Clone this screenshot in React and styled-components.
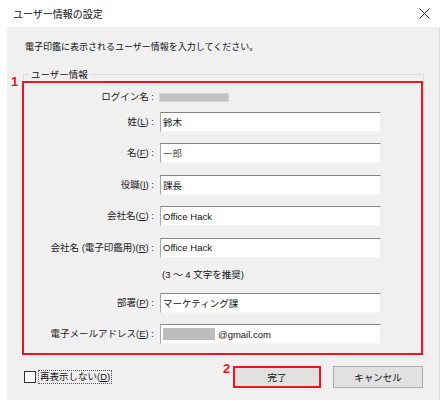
import React from "react";
import styled, { createGlobalStyle } from "styled-components";

const GlobalStyle = createGlobalStyle`
  html, body { margin: 0; padding: 0; background: #ffffff; }
  body { font-family: "Liberation Sans", "Noto Sans CJK JP", sans-serif; color: #111; }
  * { box-sizing: border-box; }
`;

const Page = styled.div`
  width: 443px;
  height: 407px;
  padding-left: 7px;
  background: #fff;
`;

const Window = styled.div`
  position: relative;
  width: 433px;
  display: flex;
  flex-direction: column;
`;

const TitleBar = styled.div`
  height: 27px;
  background: #fff;
  display: flex;
  align-items: center;
  justify-content: space-between;
  padding: 0 10px 0 6px;
  font-size: 10px;
  color: #111;
`;

const Body = styled.div`
  height: 373px;
  background: #f0f0f0;
  border-right: 1px solid #dadada;
  padding: 13px 16px 11px 16px;
  display: flex;
  flex-direction: column;
`;

const Intro = styled.div`
  font-size: 9px;
  line-height: 14px;
  padding-left: 2px;
  white-space: nowrap;
`;

const Group = styled.fieldset`
  margin: 14px -1px 0 0;
  padding: 0;
  min-width: 0;
  border: 1px solid #dcdcdc;
  border-bottom: none;
`;

const Legend = styled.legend`
  font-size: 9.5px;
  line-height: 13px;
  padding: 0 2px;
  margin-left: 5px;
`;

const RedFrame = styled.div`
  margin: 0 0 0 -2px;
  border: 2px solid #f0141e;
  padding: 8px 0 8.5px 0;
  display: flex;
  flex-direction: column;
  gap: 11.5px;
`;

const Row = styled.div`
  display: grid;
  grid-template-columns: 130px 221px;
  column-gap: 6px;
  align-items: center;
  height: ${(p) => p.$h}px;
`;

const Label = styled.div`
  text-align: right;
  white-space: nowrap;
  font-size: 9.5px;
  line-height: 12px;
  color: #1a1a1a;
  u { text-decoration: underline; }
`;

const Input = styled.div`
  height: 20px;
  background: #fff;
  border: 1px solid;
  border-color: #858585 #ececec #f6f6f6 #a8a8a8;
  display: flex;
  align-items: center;
  padding-left: 2px;
  font-size: 9.5px;
  color: #111;
  white-space: nowrap;
`;

const GrayBar = styled.div`
  width: 70px;
  height: 9px;
  margin-left: -1px;
  background: #c2c2c2;
  border: 1px solid #d4d4d4;
`;

const Masked = styled.span`
  display: inline-block;
  width: 52px;
  height: 12px;
  background: #bdbdbd;
  margin-right: 3px;
`;

const Hint = styled.div`
  grid-column: 2;
  font-size: 9.5px;
  line-height: 12px;
  padding-left: 2px;
  white-space: nowrap;
`;

const Footer = styled.div`
  margin-top: 11px;
  display: flex;
  align-items: center;
  justify-content: space-between;
`;

const CheckLabel = styled.label`
  display: flex;
  align-items: center;
  gap: 2px;
  margin-left: 1px;
  font-size: 9.5px;
`;

const Box = styled.span`
  width: 12px;
  height: 12px;
  background: #fff;
  border: 1px solid #333;
`;

const Focus = styled.span`
  border: 1px dotted #555;
  padding: 0 1px;
  line-height: 12px;
  u { text-decoration: underline; }
`;

const Buttons = styled.div`
  display: flex;
  gap: 12px;
`;

const Button = styled.div`
  width: ${(p) => (p.$marked ? 88 : 90)}px;
  height: 22px;
  background: #e1e1e1;
  border: ${(p) => (p.$marked ? "2px solid #f0141e" : "1px solid #adadad")};
  display: flex;
  align-items: center;
  justify-content: center;
  font-size: 9.5px;
  color: #111;
`;

const Badge = styled.div`
  position: absolute;
  left: ${(p) => p.$x}px;
  top: ${(p) => p.$y}px;
  color: #f0141e;
  font-weight: bold;
  font-size: 13px;
  line-height: 14px;
  font-family: "Liberation Sans", sans-serif;
`;

const CloseIcon = () => (
  <svg width="11" height="11" viewBox="0 0 11 11">
    <path d="M0.5 0.5 L10.5 10.5 M10.5 0.5 L0.5 10.5" stroke="#333" strokeWidth="1" fill="none" />
  </svg>
);

const fields = [
  { label: <>姓(<u>L</u>) :</>, value: "鈴木" },
  { label: <>名(<u>F</u>) :</>, value: "一郎", muted: true },
  { label: <>役職(<u>I</u>) :</>, value: "課長" },
  { label: <>会社名(<u>C</u>) :</>, value: "Office Hack" },
  { label: <>会社名 (電子印鑑用)(<u>R</u>) :</>, value: "Office Hack" },
];

export default function App() {
  return (
    <>
      <GlobalStyle />
      <Page>
        <Window>
          <TitleBar>
            <span>ユーザー情報の設定</span>
            <CloseIcon />
          </TitleBar>
          <Body>
            <Intro>電子印鑑に表示されるユーザー情報を入力してください。</Intro>
            <Group>
              <Legend>ユーザー情報</Legend>
              <RedFrame>
                <Row $h={9}>
                  <Label>ログイン名 :</Label>
                  <GrayBar />
                </Row>
                {fields.map((f, i) => (
                  <Row key={i} $h={20}>
                    <Label>{f.label}</Label>
                    <Input style={f.muted ? { color: "#555" } : undefined}>{f.value}</Input>
                  </Row>
                ))}
                <Row $h={12}>
                  <Hint>(3 ～ 4 文字を推奨)</Hint>
                </Row>
                <Row $h={20}>
                  <Label>部署(<u>P</u>) :</Label>
                  <Input>マーケティング課</Input>
                </Row>
                <Row $h={20}>
                  <Label>電子メールアドレス(<u>E</u>) :</Label>
                  <Input>
                    <Masked />
                    @gmail.com
                  </Input>
                </Row>
              </RedFrame>
            </Group>
            <Footer>
              <CheckLabel>
                <Box />
                <Focus>再表示しない(<u>D</u>)</Focus>
              </CheckLabel>
              <Buttons>
                <Button $marked>完了</Button>
                <Button>キャンセル</Button>
              </Buttons>
            </Footer>
          </Body>
          <Badge $x={4} $y={75}>1</Badge>
          <Badge $x={216} $y={362}>2</Badge>
        </Window>
      </Page>
    </>
  );
}
